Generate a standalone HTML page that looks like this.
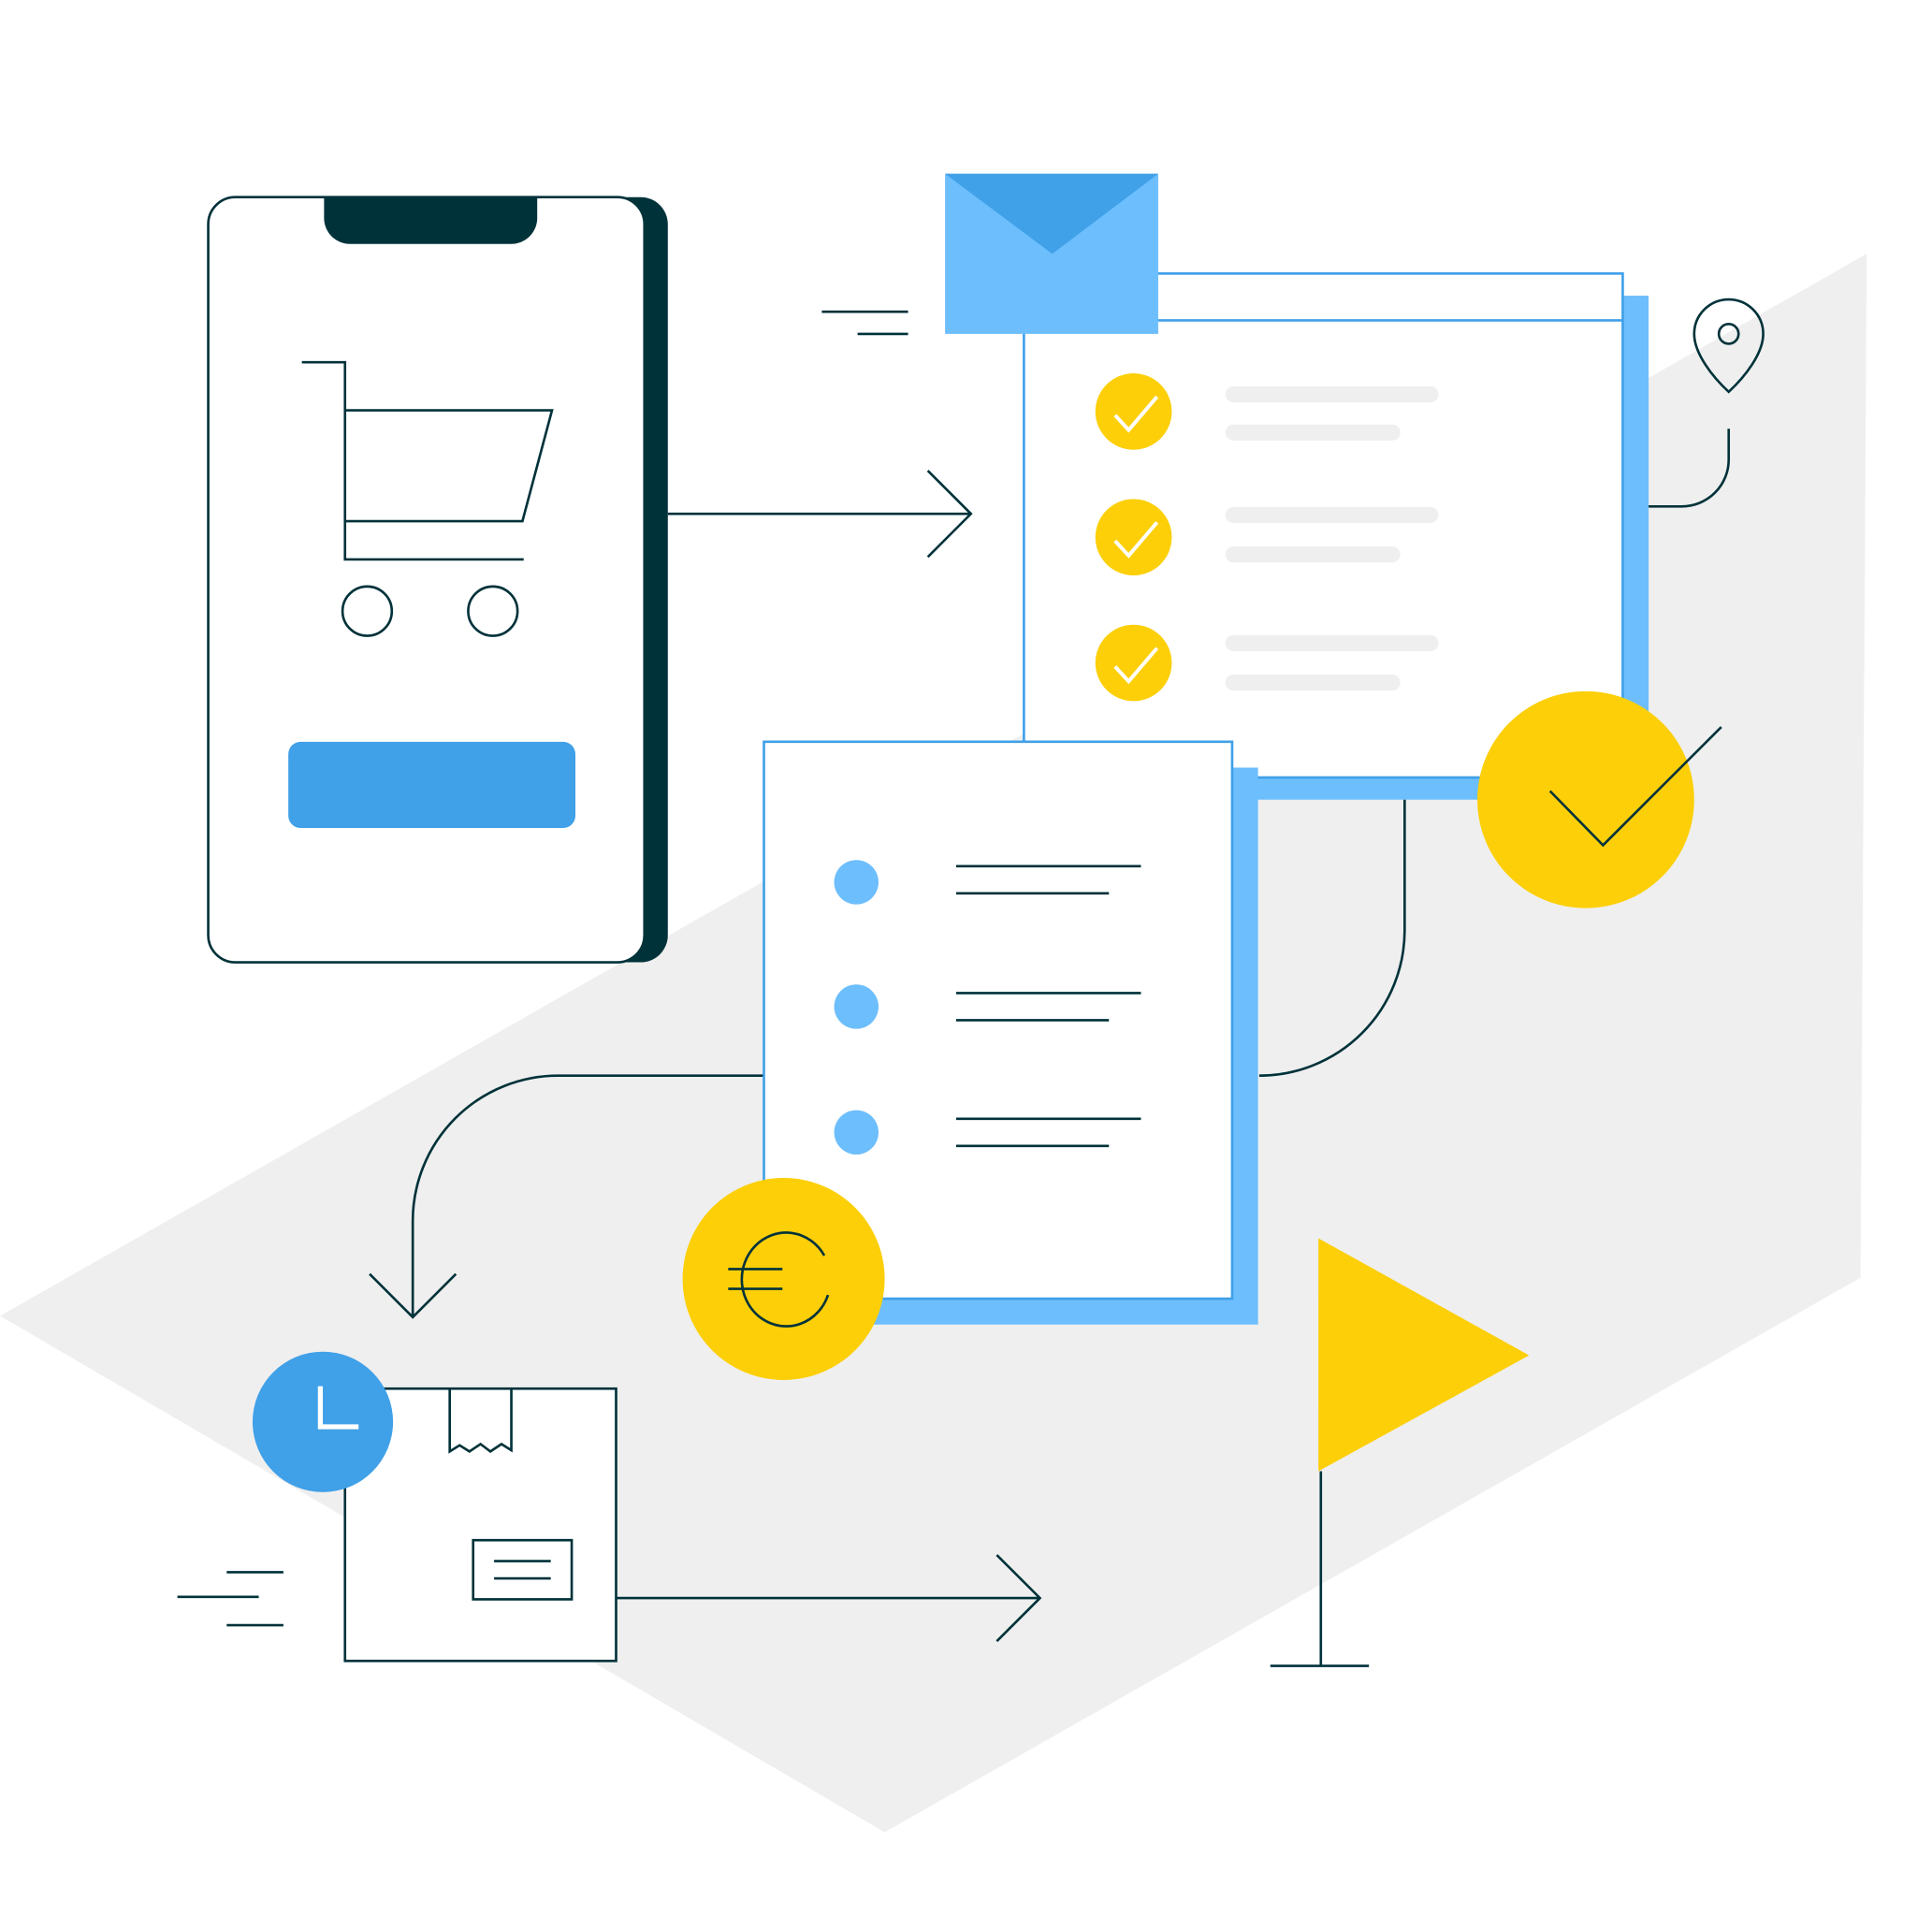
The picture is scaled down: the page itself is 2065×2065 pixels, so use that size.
<!DOCTYPE html>
<html><head><style>html,body{margin:0;padding:0;background:#fff}svg{display:block}</style></head><body>
<svg width="2065" height="2065" viewBox="0 0 1568 1568" xmlns="http://www.w3.org/2000/svg" fill="none" stroke="#00323a" stroke-width="2">
<polygon points="0,1068 1515,206 1510,1037 718,1487" fill="#efefef" stroke="none"/>
<!-- phone -->
<rect x="190" y="160" width="352" height="621" rx="22" fill="#00323a" stroke="none"/>
<rect x="169" y="160" width="354" height="621" rx="22" fill="#fff"/>
<path d="M263 160 H436 V177 a21 21 0 0 1 -21 21 H284 a21 21 0 0 1 -21 -21 Z" fill="#00323a" stroke="none"/>
<path d="M245 294 H280 V454 H425 M280 333 H448 L424 423 H280"/>
<circle cx="298" cy="496" r="20"/><circle cx="400" cy="496" r="20"/>
<rect x="234" y="602" width="233" height="70" rx="10" fill="#40a0e8" stroke="none"/>
<path d="M542 417 H788 M753 382 L788 417 L753 452"/>
<!-- checklist window -->
<rect x="840" y="240" width="498" height="409" fill="#6dbefc" stroke="none"/>
<rect x="831" y="222" width="486" height="409" fill="#fff" stroke="#40a0e8"/>
<line x1="831" y1="260" x2="1317" y2="260" stroke="#40a0e8"/>
<g stroke="none" fill="#fccf08"><circle cx="920" cy="334" r="31"/><circle cx="920" cy="436" r="31"/><circle cx="920" cy="538" r="31"/></g>
<g stroke="#fff" stroke-width="3"><path d="M905 337 l11 12 l23 -27"/><path d="M905 439 l11 12 l23 -27"/><path d="M905 541 l11 12 l23 -27"/></g>
<g stroke="#efefef" stroke-width="13" stroke-linecap="round"><path d="M1001 320 H1161 M1001 351 H1130 M1001 418 H1161 M1001 450 H1130 M1001 522 H1161 M1001 554 H1130"/></g>
<!-- envelope -->
<rect x="767" y="141" width="173" height="130" fill="#6dbefc" stroke="none"/>
<polygon points="767,141 940,141 854,206" fill="#40a0e8" stroke="none"/>
<path d="M667 253 H737 M696 271 H737"/>
<!-- pin -->
<path d="M1403 318 C1390 306 1375 287 1375 271 a28 28 0 0 1 56 0 C1431 287 1416 306 1403 318 Z"/>
<circle cx="1403" cy="271" r="8"/>
<path d="M1338 411 H1365 a38 38 0 0 0 38 -38 V348"/>
<!-- connectors -->
<path d="M1140 649 V755 a118 118 0 0 1 -118 118"/>
<path d="M620 873 H453 a118 118 0 0 0 -118 118 V1069 M300 1034 L335 1069 L370 1034"/>
<!-- big check -->
<circle cx="1287" cy="649" r="88" fill="#fccf08" stroke="none"/>
<path d="M1258 642 L1301 686 L1397 590"/>
<!-- document -->
<rect x="640" y="623" width="381" height="452" fill="#6dbefc" stroke="none"/>
<rect x="620" y="602" width="380" height="452" fill="#fff" stroke="#40a0e8"/>
<g fill="#6dbefc" stroke="none"><circle cx="695" cy="716" r="18"/><circle cx="695" cy="817" r="18"/><circle cx="695" cy="919" r="18"/></g>
<path d="M776 703 H926 M776 725 H900 M776 806 H926 M776 828 H900 M776 908 H926 M776 930 H900"/>
<!-- euro -->
<circle cx="636" cy="1038" r="82" fill="#fccf08" stroke="none"/>
<path d="M669 1019 A36 38 0 1 0 672 1051"/>
<path d="M591 1030 H635 M591 1046 H635"/>
<!-- box -->
<rect x="280" y="1127" width="220" height="221" fill="#fff"/>
<path d="M365 1127 V1178 l8 -5 l8 5 l9 -6 l8 6 l9 -6 l8 5 V1127"/>
<rect x="384" y="1250" width="80" height="48"/>
<path d="M401 1267 H447 M401 1281 H447"/>
<circle cx="262" cy="1154" r="57" fill="#40a0e8" stroke="none"/>
<path d="M260 1125 V1158 H291" stroke="#fff" stroke-width="4"/>
<path d="M500 1297 H843 M809 1262 L844 1297 L809 1332"/>
<path d="M184 1276 H230 M144 1296 H210 M184 1319 H230"/>
<!-- flag -->
<polygon points="1070,1005 1241,1100 1070,1194" fill="#fccf08" stroke="none"/>
<path d="M1072 1194 V1352 M1031 1352 H1111"/>
</svg>
</body></html>
